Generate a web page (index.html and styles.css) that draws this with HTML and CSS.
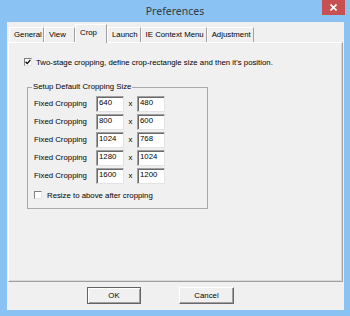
FILE: index.html
```html
<!DOCTYPE html>
<html>
<head>
<meta charset="utf-8">
<link rel="stylesheet" href="styles.css">
</head>
<body>
<div class="window">
  <div class="titlebar">
    <span class="title">Preferences</span>
    <div class="close">
      <svg width="7" height="7" viewBox="0 0 7 7"><path d="M0.5 0.5 L6.5 6.5 M6.5 0.5 L0.5 6.5" stroke="#fff" stroke-width="1.6"/></svg>
    </div>
  </div>
  <div class="client">
    <div class="tabs">
      <div class="tab general">General</div>
      <div class="tab view">View</div>
      <div class="tab active">Crop</div>
      <div class="tab">Launch</div>
      <div class="tab">IE Context Menu</div>
      <div class="tab">Adjustment</div>
    </div>
    <div class="panel">
      <div class="check topcheck">
        <span class="box"><svg width="6" height="6" viewBox="0 0 6 6"><path d="M0.6 2.8 L2.3 4.6 L5.4 0.9" fill="none" stroke="#000" stroke-width="1.3"/></svg></span>
        <span>Two-stage cropping, define crop-rectangle size and then it's position.</span>
      </div>
      <fieldset class="group">
        <legend>Setup Default Cropping Size</legend>
        <div class="rows">
          <div class="row"><span class="lbl">Fixed Cropping</span><span class="field">640</span><span class="times">x</span><span class="field">480</span></div>
          <div class="row"><span class="lbl">Fixed Cropping</span><span class="field">800</span><span class="times">x</span><span class="field">600</span></div>
          <div class="row"><span class="lbl">Fixed Cropping</span><span class="field">1024</span><span class="times">x</span><span class="field">768</span></div>
          <div class="row"><span class="lbl">Fixed Cropping</span><span class="field">1280</span><span class="times">x</span><span class="field">1024</span></div>
          <div class="row"><span class="lbl">Fixed Cropping</span><span class="field">1600</span><span class="times">x</span><span class="field">1200</span></div>
        </div>
        <div class="check resize">
          <span class="box"></span>
          <span>Resize to above after cropping</span>
        </div>
      </fieldset>
    </div>
    <div class="buttons">
      <button class="btn default">OK</button>
      <button class="btn cancel">Cancel</button>
    </div>
  </div>
</div>
</body>
</html>
```
FILE: styles.css
```css
* { box-sizing: border-box; }
html, body { margin: 0; padding: 0; }
body {
  width: 350px;
  height: 316px;
  overflow: hidden;
  background: #8ac3f3;
  font-family: "Liberation Sans", Arial, sans-serif;
  font-size: 7.8px;
  color: #000;
}
.window {
  width: 350px;
  height: 316px;
  display: flex;
  flex-direction: column;
}
.titlebar {
  height: 22px;
  display: grid;
  grid-template-columns: 1fr auto 1fr;
  align-items: start;
}
.title {
  grid-column: 2;
  font-family: "Noto Sans", "Liberation Sans", sans-serif;
  font-size: 10.5px;
  line-height: 23px;
  color: #363b40;
}
.close {
  grid-column: 3;
  justify-self: end;
  width: 23px;
  height: 15px;
  margin-right: 5px;
  background: #c75050;
  display: flex;
  align-items: center;
  justify-content: center;
}
.close svg { display: block; }
.client {
  margin: 0 6px 0 7px;
  height: 288px;
  background: #f0f0f0;
  display: flex;
  flex-direction: column;
}
.tabs {
  height: 20px;
  display: flex;
  align-items: flex-end;
  padding-left: 2px;
}
.tab {
  height: 15px;
  line-height: 14px;
  padding: 0 2px 0 4px;
  border-top: 1px solid #fff;
  border-left: 1px solid #fff;
  border-right: 1px solid #a0a0a0;
  white-space: nowrap;
}
.tab.general {
  width: 35px;
}
.tab.view {
  width: 31px;
}
.tab.active {
  width: 32px;
  height: 19px;
  margin-bottom: -1px;
  padding: 1px 0 0 4px;
  background: #f0f0f0;
  position: relative;
  z-index: 1;
}
.panel {
  margin: 0 1px;
  height: 240px;
  border-top: 1px solid #fff;
  border-left: 1px solid #fff;
  border-right: 1px solid #a0a0a0;
  border-bottom: 1px solid #a0a0a0;
  box-shadow: inset -1px -1px #dadada;
  padding: 14px 0 0 15px;
}
.check {
  display: flex;
  align-items: center;
  height: 10px;
  white-space: nowrap;
}
.topcheck { gap: 4px; }
.box {
  width: 8px;
  height: 8px;
  background: #fff;
  border-top: 1px solid #808080;
  border-left: 1px solid #808080;
  border-right: 1px solid #e6e6e6;
  border-bottom: 1px solid #e6e6e6;
  display: flex;
  align-items: center;
  justify-content: center;
  flex: none;
}
.box svg { display: block; }
.group {
  margin: 15px 0 0 3px;
  width: 181px;
  min-width: 0;
  border: 1px solid #a9a9a9;
  padding: 0 0 8px 6px;
}
.group legend {
  padding: 0 1px;
  margin-left: -2px;
  line-height: 10px;
}
.rows {
  margin-top: 4px;
  display: flex;
  flex-direction: column;
}
.row {
  display: flex;
  align-items: flex-start;
  height: 18px;
}
.lbl {
  width: 62px;
  line-height: 16px;
}
.field {
  width: 28px;
  height: 16px;
  background: #fff;
  border-top: 1px solid #a0a0a0;
  border-left: 1px solid #a0a0a0;
  border-right: 1px solid #e3e3e3;
  border-bottom: 1px solid #e3e3e3;
  box-shadow: inset 1px 1px #696969;
  padding-left: 2px;
  line-height: 12px;
}
.times {
  width: 13px;
  text-align: center;
  line-height: 16px;
}
.resize {
  margin-top: 4px;
  gap: 5px;
}
.buttons {
  display: flex;
  gap: 38px;
  margin-top: 5px;
  padding-left: 80px;
}
.btn {
  font: inherit;
  color: #000;
  height: 17px;
  width: 55px;
  padding: 0;
  background: #f0f0f0;
  border: 1px solid;
  border-color: #fff #696969 #696969 #fff;
  box-shadow: inset -1px -1px #a0a0a0;
  border-radius: 0;
}
.btn.default {
  width: 54px;
  border-color: #646464;
  box-shadow: inset 1px 1px #fff, inset -1px -1px #a0a0a0;
}
```
